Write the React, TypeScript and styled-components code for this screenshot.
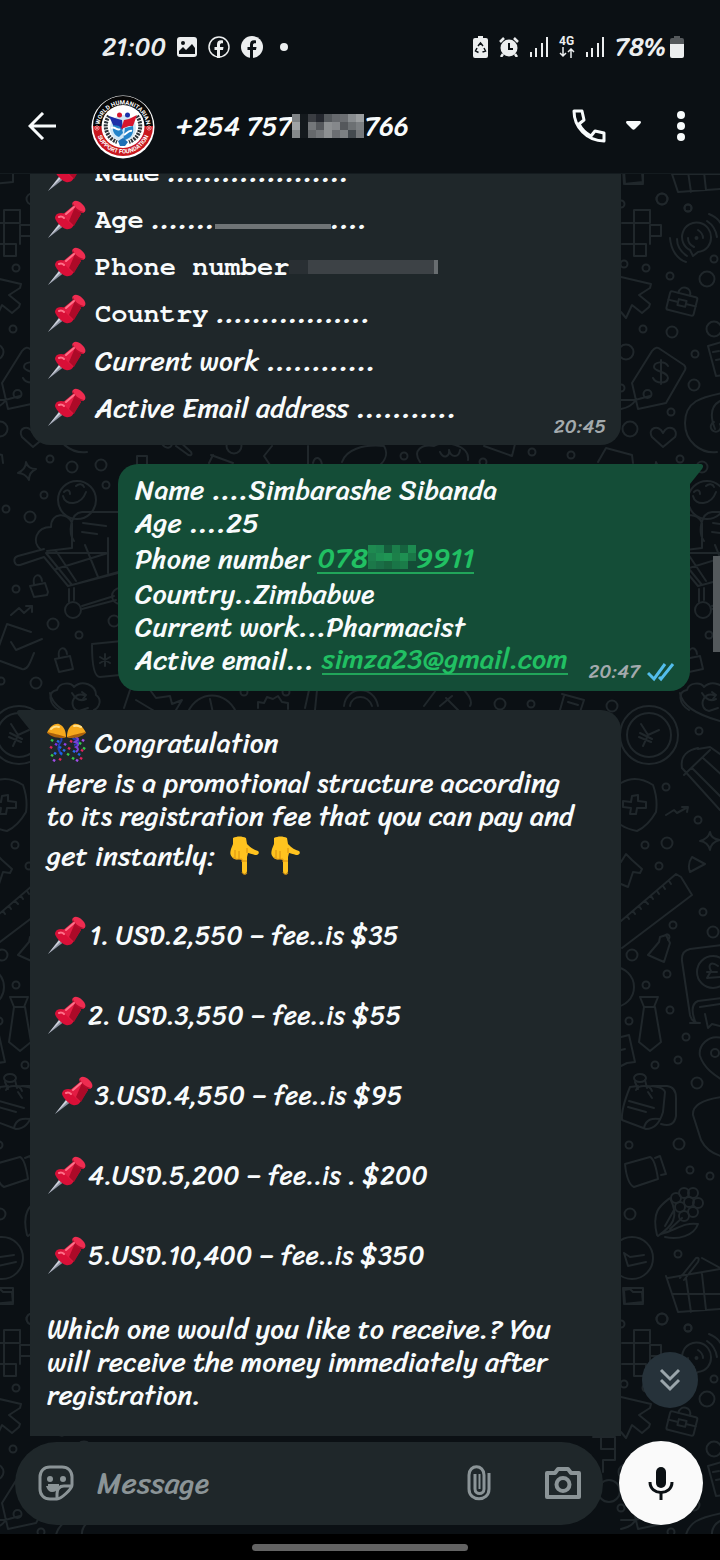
import React from 'react';
import styled, { createGlobalStyle, css } from 'styled-components';

const HAND = 'Sriracha, "Comic Neue", "Open Sans", sans-serif';
const MONO = 'FreeMono, "Courier Prime", "Liberation Mono", monospace';

const GlobalStyle = createGlobalStyle`
  * { box-sizing: border-box; }
  html, body { margin: 0; background: #0b1014; }
  body { font-family: ${HAND}; color: #f8fbfc; }
`;

const Screen = styled.div`
  min-height: 100vh;
  display: flex;
  flex-direction: column;
  overflow: hidden;
`;

const StatusBar = styled.div`
  height: 94px;
  padding: 0 36px 0 102px;
  display: flex;
  align-items: center;
  justify-content: space-between;
  font-size: 25px;
  line-height: 32px;
  color: #eceeef;
`;

const StatusGroup = styled.div<{ $gap: number }>`
  display: flex;
  align-items: center;
  gap: ${(p) => p.$gap}px;
  svg { display: block; flex: none; }
`;

const Level = styled.span`
  display: flex;
  align-items: center;
  gap: 4px;
`;

const Network = styled.span`
  display: flex;
  flex-direction: column;
  align-items: center;
  font: 700 12px/11px Roboto, sans-serif;
`;

const Header = styled.header`
  padding: 0 35px 16px 28px;
  height: 80px;
  display: flex;
  align-items: center;
  border-bottom: 1px solid #141b1f;
`;

const IconButton = styled.button`
  padding: 0;
  border: 0;
  background: none;
  color: inherit;
  display: flex;
  align-items: center;
  justify-content: center;
  flex: none;
`;

const AvatarLink = styled.a`
  margin: 2px 22px 0 35px;
  display: flex;
  flex: none;
`;

const Contact = styled.h1`
  flex: 1;
  margin: 0;
  display: flex;
  align-items: center;
  white-space: pre;
  font-size: 26px;
  line-height: 36px;
  font-weight: 400;
`;

const HeaderActions = styled.div`
  display: flex;
  align-items: center;
  gap: 20px;
`;

const CaretButton = styled(IconButton)`
  margin-right: 16px;
`;

const Main = styled.main`
  flex: 1;
  position: relative;
  display: flex;
  flex-direction: column;
  background: #0b1014;
`;

const WallpaperArt = styled.svg`
  position: absolute;
  inset: 0;
  width: 100%;
  height: 100%;
`;

const Chat = styled.section`
  position: relative;
  flex: 1;
  display: flex;
  flex-direction: column;
  gap: 19px;
  padding: 0 30px;
  overflow: hidden;
`;

type BubbleProps = { $side: 'in' | 'out'; $edge?: 'top' | 'bottom' };

const Bubble = styled.article<BubbleProps>`
  position: relative;
  display: flex;
  align-items: flex-end;
  justify-content: space-between;
  border-radius: 20px;
  padding: 9px 15px 15px 17px;
  ${(p) =>
    p.$side === 'in'
      ? css`
          background: #1f272a;
          margin-right: 69px;
        `
      : css`
          background: #144d37;
          margin-left: 88px;
          border-top-right-radius: 0;
        `}
  ${(p) =>
    p.$edge === 'top' &&
    css`
      margin-top: -25px;
      padding-top: 0;
      padding-bottom: 14px;
      border-top-left-radius: 0;
      border-top-right-radius: 0;
    `}
  ${(p) =>
    p.$edge === 'bottom' &&
    css`
      border-radius: 0 20px 0 0;
      padding-bottom: 25px;
      flex: 1;
      align-items: flex-start;
    `}
`;

const Tail = styled.svg<{ $side: 'in' | 'out' }>`
  position: absolute;
  top: 0;
  ${(p) => (p.$side === 'in' ? 'left: -13px; transform: scaleX(-1);' : 'right: -13px;')}
  width: 14px;
  height: 20px;
`;

const Lines = styled.div`
  font-size: 28px;
  white-space: pre;
`;

const Line = styled.div<{ $h?: number; $mono?: boolean; $figures?: boolean }>`
  display: flex;
  align-items: center;
  min-height: ${(p) => p.$h ?? 33}px;
  line-height: 33px;
  ${(p) =>
    p.$mono &&
    css`
      font-family: ${MONO};
      font-size: 27px;
      font-weight: 700;
    `}
  ${(p) => p.$figures && 'font-size: 26px;'}
  svg { flex: none; }
`;

const Text = styled.span`
  display: block;
`;

const Dots = styled.span`
  font: 400 30px/20px ${HAND};
`;

const EmojiArt = styled.svg<{ $end: number }>`
  display: block;
  margin-right: ${(p) => p.$end}px;
`;

const Smear = styled.span<{ $w: number; $h: number; $tone: string }>`
  width: ${(p) => p.$w}px;
  height: ${(p) => p.$h}px;
  background: ${(p) => p.$tone};
`;

const DotSmear = styled(Smear)`
  align-self: flex-end;
  margin-bottom: 14px;
`;

const TextLink = styled.a`
  display: flex;
  align-items: center;
  height: 31px;
  color: #21c063;
  text-decoration: none;
  border-bottom: 2px solid #21a55a;
`;

const Stamp = styled.footer`
  display: flex;
  align-items: center;
  gap: 7px;
  flex: none;
  margin-bottom: -8px;
  font-size: 19px;
  line-height: 24px;
  color: #a3aaad;
`;

const JumpDown = styled(IconButton)`
  position: absolute;
  right: 22px;
  bottom: 28px;
  width: 56px;
  height: 56px;
  border-radius: 50%;
  background: #26323a;
  color: #9aa5ab;
`;

const ScrollThumb = styled.div`
  position: absolute;
  right: 0;
  top: 382px;
  width: 7px;
  height: 96px;
  background: #54595c;
`;

const Composer = styled.form`
  position: relative;
  display: flex;
  align-items: center;
  gap: 16px;
  padding: 5px 17px 9px 15px;
`;

const Pill = styled.div`
  flex: 1;
  min-width: 0;
  height: 83px;
  padding: 0 22px;
  border-radius: 42px;
  background: #1f272a;
  color: #8b9497;
  display: flex;
  align-items: center;
`;

const Field = styled.input`
  flex: 1;
  width: 0;
  min-width: 0;
  margin: 0 22px;
  padding: 0;
  border: 0;
  outline: 0;
  background: none;
  color: #f8fbfc;
  font: 400 30px/44px ${HAND};
  &::placeholder { color: #8b9497; opacity: 1; }
`;

const ClipButton = styled(IconButton)`
  margin-right: 54px;
`;

const Mic = styled(IconButton)`
  width: 84px;
  height: 84px;
  border-radius: 50%;
  background: #fafafa;
  color: #0b1014;
`;

const NavBar = styled.div`
  height: 26px;
  background: #000;
  display: flex;
  align-items: center;
  justify-content: center;
`;

const NavHandle = styled.div`
  width: 30%;
  height: 7px;
  border-radius: 4px;
  background: #636363;
`;

/* ---------- drawings ---------- */

const SMALL: number[][] = [
  [688, 208], [621, 204], [714, 259], [624, 264], [646, 268], [670, 276], [643, 329], [695, 354], [671, 412],
  [621, 388], [680, 459], [674, 495], [736, 485], [636, 509], [646, 589], [709, 635], [631, 681], [699, 731],
  [666, 787], [698, 820], [645, 845], [659, 866], [703, 912], [673, 925], [667, 974], [646, 985], [670, 1010],
  [629, 1021], [686, 1037], [678, 1060], [655, 1065], [629, 1145], [690, 1170], [710, 1176], [678, 1254],
  [688, 1328], [404, 456], [532, 452], [571, 455], [483, 462], [531, 704], [244, 692], [286, 692],
];
const MEDIUM: number[][] = [
  [662, 199], [672, 332], [694, 385], [702, 467], [731, 465], [660, 517], [683, 624], [744, 621], [666, 683],
  [612, 706], [667, 843], [713, 932], [632, 955], [697, 1083], [679, 1144], [630, 1214], [662, 1319], [500, 704],
];
const LARGE: number[][] = [[707, 279], [714, 329], [626, 352], [630, 429], [234, 446]];

const Doodles = () => (
  <g id="doodles" fill="none" stroke="#20272b" strokeWidth="2" strokeLinejoin="round" strokeLinecap="round">
    {SMALL.map(([x, y]) => <circle key={`${x}-${y}`} cx={x} cy={y} r="3.5" />)}
    {MEDIUM.map(([x, y]) => <circle key={`${x}-${y}`} cx={x} cy={y} r="5.5" />)}
    {LARGE.map(([x, y]) => <circle key={`${x}-${y}`} cx={x} cy={y} r="7.5" />)}
    <path d="M623 168h20v14l-19 2zM593 317h8v12h14v11h-12v12M601 329v-12h14v12M622 223h28v-13h-16v46h12v-12h-24M650 225h11v11h-11zM650 225v19" />
    <circle cx="609" cy="371" r="11" />
    <path d="M690 250l3 6 5-4c9-1 13-8 13-14a14.500 14.500 0 1 0-21 12zM688 238c0 4 2 7 6 9M698 230c3 2 5 5 5 8M670 238c1 12 7 21 16 24M677 239c0 7 4 13 10 17M707 221c6 4 9 9 10 16M709 214c8 3 12 7 14 15" />
    <circle cx="696.500" cy="238" r="1" />
    <path d="M621 277l30 7-1 4-11 7 11 9-1 3-7 6-10-8-6 13-5-6" />
    <g transform="rotate(14 682 303)"><rect x="668" y="294" width="28" height="19" rx="2" /><path d="M676 294c0-9 12-9 12 0M668 303h10M686 303h10" /><rect x="678" y="300" width="8" height="6" /></g>
    <path d="M660 349l24 16c2 2 2 3 1 5l-19 33-28 6-6-26 20-32c3-4 6-4 8-2zM661 360v24M668 366c-4-6-14-4-14 1s14 4 14 11c-1 6-12 6-15 0M621 400h14l15-4M621 409q10-2 14-8" />
    <circle cx="647.500" cy="394" r="4" />
    <path d="M722 342l-14 4 8 30 8-1M713 352l6-1M716 360l5-1M663 447l-11-10c-5-8 6-14 11-4 5-10 16-4 12 4zM722 393c-20 4-37 8-37 30 0 19 16 31 32 29M720 401c-11 6-9 18-5 28M714 422a5 5 0 1 0 6 2" />
    <path d="M656 462q2 7 10 7-7 3-7 11-4-7-11-7 8-4 8-11z" />
    <circle cx="707" cy="500" r="19" /><path d="M694 492c3-3 6-2 6 2M706 486c3-3 7-2 8 1M693 496c2 10 18 10 23-4" />
    <path d="M671 550c-10-8-5-23 10-23 0-15 17-15 21-4v25l-25 3M704 541c-6-8-4-28 8-29h36M713 523l23 3M712 532l15 2M674 549l-26 7c-6 2-4 10 2 9l24-8 24 29 50-13M676 553h60M676 553l26 32 50-14M686 551l20 30M715 545l13 32M738 538v35M686 569l52-16M699 589v13M704 588v12M712 606l32-10M712 609l34-9" />
    <circle cx="703" cy="610" r="8" /><circle cx="750" cy="596" r="8" />
    <path d="M660 586l15-3 3 9-1 3-13 2zM664 584c-2-10 7-12 8-3M685 659l15-3 3 13-14 3zM689 657c-2-10 7-12 8-3M641 615l8-7 5 5 8-7M656 606h6v6M661 632l-24-8-8 22M641 642l5 8 26-11M622 658l30 11c6 2 9-9 12-16M722 644l40-4M750 675l-20 2c-5 0-8-8-8-32M735 654v12M730 657l10 6M740 657l-10 6M689 710c-10-6-12-18-2-20 2-8 14-8 17-3 8-8 22-2 22 8 6 4 4 12-2 15M714 695c-12-4-16 14-5 16l9-3M712 692l4 3-3 4" />
    <circle cx="649" cy="735" r="29" /><circle cx="649" cy="735" r="22" />
    <path d="M641 724l7 11 11-5M648 735l-5 11M640 733l12 6M639 737l12 5M680 693q3 18 40 28M702 693q6 10 14 6M698 749l12-2 20 14M682 768l38 42M682 768c-2-12 6-18 16-20M684 775l26-25M692 768l30 30M703 758l20 18M621 783q15-9 32 2 5 14 3 27-8 14-19 19-10-2-16-6M632 796l-1 6-8-1v6l8 1-1 6h6l1-6h9v-6l-8-1v-6zM666 815l8-5 3 3 11-6M682 807h6l-1 5" />
    <path d="M710 832q1 7 10 8-9 2-10 10-2-8-10-9 8-2 10-9zM692 857l13 7-15 8q-3-8 2-15zM621 862l5-8 6 6 10 9-2 4-7-1-5 15-7-3M621 921l55-47 5 3 11 18-70 53M627 916l2 3M633 911l2 3M639 906l2 3M645 901l3 3M651 896l2 3M657 891l2 3M663 886l2 3M669 881l2 3M648 955l11-13 1-5 6-2 4 8-6 19-7-3zM664 936c3-4 8 0 4 4" />
    <circle cx="614" cy="987" r="20" />
    <path d="M640 997h18l-4 10h-10zM644 1007l-5 35 11 9 11-9-6-35M621 1037l8-2 6 27-8 1-6 3M621 1050l4-1M722 945l-32 4q-9 2-8 12l8 54q2 8 10 8M690 1023h10M722 998l-24 3q-9 4-3 20M700 1007l20-3M705 1014l3 14 4-4 8 2" />
    <circle cx="713" cy="972" r="16" /><path d="M718 966c-8-6-10 0-7 5l-4 7 14-1M707 972h10M722 1038c-14-4-24 8-22 18 4 12 14 19 24 25M722 1097c-15 2-30 6-29 18l8 25q6 12 20 16" />
    <circle cx="715" cy="1053" r="4" />
    <path d="M638 1086l-8 1q-9 22-8 33l24 9q12 0 17-17l2-20q-2-6-19-6M652 1086l15 0q9 1 9 12v18q-2 12-15 8M629 1101l25 7M628 1107l18 5M644 1128c2-9 8-10 16-9" />
    <ellipse cx="640" cy="1078" rx="6" ry="4" /><path d="M635 1082l3 7M645 1080l2 8M636 1090c2-5 14-6 16 1M648 1092l4 6" />
    <path d="M625 1164l25-7q5 2 8 22l-24 8q-7-3-9-23zM655 1158l5-2 6 18-5 1M657 1235c-6-24 4-30 13-37 10 20 2 28-12 38zM661 1234c16-4 22-12 37-10-4 12-20 16-33 13M665 1226l9-16M682 1218l-12 11" />
    {[[676, 1198], [684, 1193], [693, 1193], [680, 1207], [689, 1202], [698, 1203], [684, 1216], [693, 1212]].map(([x, y]) => <circle key={`${x}-${y}`} cx={x} cy={y} r="5" />)}
    <circle cx="632" cy="1258" r="21" />
    <path d="M624 1253l6 4 14-2M624 1253l4 13 18-4M624 1290l6-1 3 3h9l1 12h-18zM668 1278l52-9M666 1276l12 36 42-3M672 1294h50M686 1278l5 34M702 1274l4 36M680 1278l16-20q4-1 2 4l-14 18M702 1258l18 10" />
    <path d="M137 456h10v12h-10zM162 444c4 6 12 4 9-2M178 440l13 12c2 4-2 4-4 2l-11-8M211 455l22 8M209 463l4-8M272 446l-8 10 8 12M308 446v22M313 463c2-8 8-6 9 2M342 462c4-12 20-18 42-16 6 10-2 18-8 22M420 462c-8-12 2-18 14-16 8-6 36-2 34 14M440 452c4 8 10 4 9-2 2 8 10 8 11 0M484 446l28 10 3-12M598 462l8-14 26 7 1 8M124 708l6-18M136 700l20 12M150 690l6 8 14-2 2 8 10-4-6 10M188 712c10-22 38-22 48 0M210 699l3 14M258 708v-6l6 1 3-6 6 2 5-3 4 6 6 1v6M305 708l4-18h8l-2 20M344 706c2-20 30-22 34 0M350 706c2-12 18-12 22 0M424 706l12-16M440 706l12-10M446 698l12 12M470 706q4-6-8-18M562 694l22 6-4 12M560 710l4-14M568 702l10 3" />
  </g>
);

const Wallpaper = () => (
  <WallpaperArt aria-hidden="true">
    <g transform="translate(0 -174)">
      <Doodles />
      <use href="#doodles" x="-630" />
      <use href="#doodles" x="630" />
      <use href="#doodles" y="1120" />
      <use href="#doodles" x="-630" y="1120" />
      <use href="#doodles" y="-1120" />
    </g>
  </WallpaperArt>
);

const Pin = ({ end = 9 }: { end?: number }) => (
  <EmojiArt $end={end} width="39" height="39" viewBox="0 0 39 39" role="img" aria-label="Pushpin">
    <path d="M1 38L14 21l4 4z" fill="#8d93a1" />
    <path d="M1 38l13-16 2 1z" fill="#d4d8e2" />
    <path d="M10 14c4-2 8-1 11 2l6 7c0 4-4 7-8 6-4-1-10-7-11-11 0-2 1-3 2-4z" fill="#d90f37" />
    <path d="M15 15l11-9 8 8-8 12z" fill="#e31c43" />
    <path d="M28 7l6 7-7 12-5-5z" fill="#ad0a28" />
    <path d="M26 2c3-3 8 0 11 4 2 3 2 6-1 7-3 0-8-4-10-7-1-2-1-3 0-4z" fill="#ee2c50" />
    <path d="M26 3c1 4 6 8 11 9-2 2-6 0-8-2-3-3-4-5-3-7z" fill="#b70b2c" />
    <path d="M12 17c2-1 4 0 5 1M19 14l8-7" fill="none" stroke="#ff7189" strokeWidth="2" strokeLinecap="round" />
  </EmojiArt>
);

const CONFETTI: [number, number, string][] = [
  [5, 17, '#35c94a'], [9, 21, '#7b35e8'], [4, 24, '#e0245e'], [13, 24, '#1d63e8'], [8, 30, '#2a6bf0'], [5, 32, '#35c94a'],
  [14, 30, '#1d63e8'], [17, 27, '#2a6bf0'], [7, 37, '#a04de8'], [13, 36, '#e0245e'], [18, 21, '#8b44e8'], [22, 25, '#e0245e'],
  [21, 31, '#35c94a'], [27, 28, '#2a6bf0'], [33, 20, '#35c94a'], [36, 17, '#a04de8'], [35, 27, '#e0245e'], [37, 25, '#35c94a'],
  [32, 31, '#1d63e8'], [34, 35, '#e0245e'], [26, 35, '#35c94a'], [30, 37, '#a04de8'], [24, 18, '#e0245e'], [11, 18, '#2a6bf0'],
];

const PartyBall = () => (
  <EmojiArt $end={9} width="39" height="39" viewBox="0 0 39 39" role="img" aria-label="Confetti ball">
    <path d="M11 12q6 3 2 8t2 12M28 12q-5 4 3 5 2 4-4 5" fill="none" stroke="#243fb5" strokeWidth="2" />
    <path d="M28 14q6 2 0 5 6 2 1 5 4 2 0 5" fill="none" stroke="#7a3fd6" strokeWidth="2" />
    {CONFETTI.map(([x, y, c]) => <rect key={`${x}-${y}`} x={x - 1} y={y - 1} width="2.5" height="2.5" fill={c} transform={`rotate(30 ${x} ${y})`} />)}
    <path d="M0 10C3 3 8 0 12 1c5 2 7 7 7 13-2 1-5 1-7 0z" fill="#f5a81c" />
    <path d="M39 10C36 3 31 0 27 1c-5 2-7 7-7 13 2 1 5 1 7 0z" fill="#f5a81c" />
    <path d="M0 9c5 1 13 3 19 5-3 2-16 1-19-5zM39 9c-5 1-13 3-19 5 3 2 16 1 19-5z" fill="#a85f0c" />
    <path d="M4 6c2-2 5-3 8-2M27 3c3-1 5 0 7 1" stroke="#ffe08a" strokeWidth="2" fill="none" strokeLinecap="round" />
  </EmojiArt>
);

const Hand = ({ end = 0 }: { end?: number }) => (
  <EmojiArt $end={end} width="29" height="39" viewBox="0 0 29 39" role="img" aria-label="Pointing down">
    <path d="M3 2c4-2 9-2 13 0l1 6c4 4 7 6 11 7 2 2 0 4-3 4-3-1-6-2-7-2l-1 4v14c0 4-5 4-5 0V24l-3-1c-3 1-6 0-7-2-2-2-2-4-1-8l2-5z" fill="#ffc31f" />
    <path d="M5 22v-8M9 23v-8M17 17v-5M12 25h5" stroke="#d98e0e" strokeWidth="1" fill="none" />
    <path d="M3 21c3 3 6 2 9 2v3M17 37c-1 2-4 2-5-1" stroke="#e59a12" fill="none" strokeWidth="1" />
  </EmojiArt>
);

const Mosaic = ({ cells, cell, height }: { cells: string[][]; cell: number; height: number }) => {
  const rowHeight = height / cells.length;
  return (
    <svg width={cells[0].length * cell} height={height} shapeRendering="crispEdges" aria-hidden="true">
      {cells.map((row, y) => row.map((c, x) => <rect key={`${x}-${y}`} x={x * cell} y={y * rowHeight} width={cell} height={rowHeight} fill={c} />))}
    </svg>
  );
};

const NAME_CELLS = [
  ['#7e8285', '#14191d', '#3a3d42', '#24272e', '#55595d', '#66696d', '#6b6e72', '#888c8f', '#9b9ea0'],
  ['#a0a3a5', '#14191d', '#74777a', '#55585c', '#8d9092', '#85888b', '#55585c', '#6c7073', '#7b7f82'],
  ['#84888a', '#14191d', '#66696c', '#74777a', '#8d9092', '#6b6e72', '#7c8083', '#444a4f', '#74777a'],
];
const LINK_CELLS = [
  ['#1e8a50', '#1d8450', '#155c3c', '#1b7d4a', '#16633f', '#1d8a50'],
  ['#1d7f4d', '#1e8f52', '#1f9554', '#1c8049', '#1e9052', '#1a7647'],
  ['#1b7849', '#1a6e46', '#18663f', '#197547', '#1a7c48', '#144d37'],
];

const Avatar = () => (
  <svg width="64" height="64" viewBox="0 0 64 64" role="img" aria-label="World Humanitarian Support Foundation">
    <defs>
      <path id="arcTop" d="M8.500 33a23.500 23.500 0 0 1 47 0" />
      <path id="arcBottom" d="M4.500 31a27.500 27.500 0 0 0 55 0" />
    </defs>
    <circle cx="32" cy="32" r="31.500" fill="#fff" />
    <path d="M2 31a30 30 0 0 1 60 0z" fill="#070707" />
    <path d="M2 31a30 30 0 0 0 60 0z" fill="#c9171e" />
    <circle cx="32" cy="31.500" r="21.500" fill="#fff" />
    <g fill="#fff" fontFamily="Roboto, sans-serif" fontWeight="700" fontSize="6" textAnchor="middle">
      <text><textPath href="#arcTop" startOffset="50%">WORLD HUMANITARIAN</textPath></text>
      <text><textPath href="#arcBottom" startOffset="50%">SUPPORT FOUNDATION</textPath></text>
    </g>
    <path d="M3 33h6M6 30v6M4 31l4 4M8 31l-4 4M55 33h6M58 30v6M56 31l4 4M60 31l-4 4" stroke="#e9868a" strokeWidth="1" />
    <path d="M18 21A17 17 0 0 0 26 47M46 21A17 17 0 0 1 38 47" fill="none" stroke="#2c3338" strokeWidth="4" strokeDasharray="2 1" />
    <circle cx="32" cy="33" r="13" fill="#cfe6f5" />
    <path d="M22 30h8l2 8-4 4c-5-2-7-6-6-12zM34 33l8-2c1 6-1 10-4 12l-6 3z" fill="#2383c9" />
    <path d="M18 21l9 3 4 1 1 10-4-4-6-1z" fill="#1c2fa8" />
    <circle cx="28.500" cy="20" r="2.500" fill="#d8152d" />
    <path d="M46 20l-8 4-5 1-3 9 8-3 4 0z" fill="#d8152d" />
    <circle cx="36.500" cy="20" r="2.500" fill="#1c2fa8" />
    <path d="M20 33c4-2 6 3 9 1M33 40c3-2 5-5 8-4" stroke="#fff" strokeWidth="2" fill="none" />
    <path d="M27 46l5-3 5 4-3 4h-5z" fill="#1d6fb5" />
  </svg>
);

const Facebook = ({ outline = false }: { outline?: boolean }) => (
  <svg width="22" height="22" viewBox="0 0 22 22" fill="none">
    <circle cx="11" cy="11" r={outline ? 10 : 11} fill={outline ? 'none' : '#eceeef'} stroke={outline ? '#eceeef' : 'none'} strokeWidth="1.500" />
    <path d="M12 22v-8h3l.5-3H12V9c0-1.500 1-2 3-1.800V4.500c-4-.8-6 .8-6 4V11H6.500v3H9v8" fill={outline ? '#eceeef' : '#0b1014'} />
  </svg>
);

const Signal = () => (
  <svg width="18" height="20" fill="#eceeef">
    <path d="M0 15h2v5H0zM5 11h2v9H5zM11 6h2v14h-2zM16 0h2v20h-2z" />
  </svg>
);

const Ticks = () => (
  <svg width="28" height="20" viewBox="0 0 28 20" fill="none" stroke="#53bdeb" strokeWidth="3" role="img" aria-label="Read">
    <path d="M1 11l6 6L18 2M12 15l2 2L26 2" />
  </svg>
);

const TailShape = ({ side }: { side: 'in' | 'out' }) => (
  <Tail $side={side} viewBox="0 0 14 20" aria-hidden="true">
    <path d="M0 0h11c3 0 4 2 2 5L1 20H0z" fill={side === 'in' ? '#1f272a' : '#144d37'} />
  </Tail>
);

const OFFERS = [
  { key: 1, lead: '', gap: 4, text: '1. USD.2,550 – fee..is $35' },
  { key: 2, lead: '', gap: 2, text: '2. USD.3,550 – fee..is $55' },
  { key: 3, lead: ' ', gap: 2, text: '3.USD.4,550 – fee..is $95' },
  { key: 4, lead: '', gap: 2, text: '4.USD.5,200 – fee..is . $200' },
  { key: 5, lead: '', gap: 2, text: '5.USD.10,400 – fee..is $350' },
];

export default function App() {
  return (
    <Screen>
      <GlobalStyle />
      <StatusBar>
        <StatusGroup $gap={11}>
          <time>21:00</time>
          <svg width="20" height="20" viewBox="0 0 20 20"><rect width="20" height="20" rx="3" fill="#eceeef" /><circle cx="6" cy="6" r="2" fill="#0b1014" /><path d="M2 17v-3l4-4 3 3 6-6 3 4v6z" fill="#0b1014" /></svg>
          <Facebook outline />
          <Facebook />
          <svg width="28" height="8"><circle cx="10" cy="4" r="4" fill="#eceeef" /></svg>
        </StatusGroup>
        <StatusGroup $gap={11}>
          <svg width="15" height="22" viewBox="0 0 15 22"><path d="M5 0h5v2h3q2 0 2 2v16q0 2-2 2H2q-2 0-2-2V4q0-2 2-2h3z" fill="#eceeef" /><path d="M5 10l2.500-3L10 10M11 12l1.500 3-3 1M4 12l-1.500 3 3 1.500" fill="none" stroke="#0b1014" strokeWidth="1.500" /></svg>
          <svg width="20" height="20" viewBox="0 0 20 20"><circle cx="10" cy="11" r="8.500" fill="#eceeef" /><path d="M10 6v6h4" stroke="#0b1014" strokeWidth="2" fill="none" /><path d="M1 5l4-4M19 5l-4-4M4 17l-2 3M16 17l2 3" stroke="#eceeef" strokeWidth="2.500" /></svg>
          <Signal />
          <Network>
            4G
            <svg width="16" height="11" fill="none" stroke="#eceeef" strokeWidth="1.500"><path d="M4 0v9M1 6l3 3 3-3M12 11V2M9 5l3-3 3 3" /></svg>
          </Network>
          <Signal />
          <Level>
            78%
            <svg width="14" height="22" viewBox="0 0 14 22"><path d="M4 0h6v2h2q2 0 2 2v4H0V4q0-2 2-2h2z" fill="#55595c" /><path d="M0 8h14v12q0 2-2 2H2q-2 0-2-2z" fill="#eceeef" /></svg>
          </Level>
        </StatusGroup>
      </StatusBar>

      <Header>
        <IconButton aria-label="Back">
          <svg width="28" height="28" viewBox="0 0 28 28" fill="none" stroke="currentColor" strokeWidth="3"><path d="M28 14H3M15 1L2 14l13 13" /></svg>
        </IconButton>
        <AvatarLink href="#profile"><Avatar /></AvatarLink>
        <Contact>
          +254 757
          <Mosaic cells={NAME_CELLS} cell={8} height={24} />
          766
        </Contact>
        <HeaderActions>
          <IconButton aria-label="Call">
            <svg width="34" height="34" viewBox="0 0 34 34" fill="none" stroke="currentColor" strokeWidth="3" strokeLinejoin="round"><path d="M2 2h8l2 9-5 4c3 6 6 9 12 12l4-5 9 2v8C15 32 2 18 2 2z" /></svg>
          </IconButton>
          <CaretButton aria-label="Call options">
            <svg width="15" height="9" viewBox="0 0 15 9" fill="currentColor"><path d="M1 0h13q2 1 0 3L9 8q-1.500 1.500-3 0L1 3q-2-2 0-3z" /></svg>
          </CaretButton>
          <IconButton aria-label="More">
            <svg width="8" height="30" viewBox="0 0 8 30" fill="currentColor"><circle cx="4" cy="4" r="4" /><circle cx="4" cy="15" r="4" /><circle cx="4" cy="26" r="4" /></svg>
          </IconButton>
        </HeaderActions>
      </Header>

      <Main>
        <Wallpaper />
        <Chat>
          <Bubble $side="in" $edge="top">
            <Lines>
              <Line $h={47} $mono><Pin /><Text>Name<Dots> ....................</Dots></Text></Line>
              <Line $h={47} $mono><Pin /><Text>Age<Dots> .......</Dots></Text><DotSmear $w={116} $h={5} $tone="#6f7476" /><Text><Dots>....</Dots></Text></Line>
              <Line $h={47} $mono>
                <Pin />Phone number
                <Smear $w={19} $h={14} $tone="#292f33" /><Smear $w={126} $h={14} $tone="#3d4246" /><Smear $w={4} $h={14} $tone="#686d70" />
              </Line>
              <Line $h={47} $mono><Pin /><Text>Country<Dots> .................</Dots></Text></Line>
              <Line $h={47}><Pin /><Text>Current work<Dots> ............</Dots></Text></Line>
              <Line $h={47}><Pin /><Text>Active Email address<Dots> ...........</Dots></Text></Line>
            </Lines>
            <Stamp><time>20:45</time></Stamp>
          </Bubble>

          <Bubble $side="out">
            <TailShape side="out" />
            <Lines>
              <Line><Text>Name<Dots> ....</Dots>Simbarashe Sibanda</Text></Line>
              <Line><Text>Age<Dots> ....</Dots>25</Text></Line>
              <Line $h={38}>
                <Text>{'Phone number '}</Text>
                <TextLink href="tel:078">078<Mosaic cells={LINK_CELLS} cell={8} height={24} />9911</TextLink>
              </Line>
              <Line><Text>Country<Dots>..</Dots>Zimbabwe</Text></Line>
              <Line><Text>Current work<Dots>...</Dots>Pharmacist</Text></Line>
              <Line><Text>Active email<Dots>... </Dots></Text><TextLink href="mailto:simza23@gmail.com">simza23@gmail.com</TextLink></Line>
            </Lines>
            <Stamp><time>20:47</time><Ticks /></Stamp>
          </Bubble>

          <Bubble $side="in" $edge="bottom">
            <TailShape side="in" />
            <Lines>
              <Line $h={47}><PartyBall />Congratulation</Line>
              <Line>Here is a promotional structure according</Line>
              <Line>to its registration fee that you can pay and</Line>
              <Line $h={47}>{'get instantly:  '}<Hand end={12} /><Hand /></Line>
              {OFFERS.map((o) => (
                <React.Fragment key={o.key}>
                  <Line />
                  <Line $h={47} $figures><Text>{o.lead}</Text><Pin end={o.gap} />{o.text}</Line>
                </React.Fragment>
              ))}
              <Line />
              <Line>Which one would you like to receive.? You</Line>
              <Line>will receive the money immediately after</Line>
              <Line>registration.</Line>
            </Lines>
          </Bubble>
          <ScrollThumb />
          <JumpDown aria-label="Scroll to latest">
            <svg width="22" height="24" viewBox="0 0 22 24" fill="none" stroke="currentColor" strokeWidth="3"><path d="M2 2l9 9 9-9M2 12l9 9 9-9" /></svg>
          </JumpDown>
        </Chat>

        <Composer onSubmit={(e) => e.preventDefault()}>
          <Pill>
            <IconButton type="button" aria-label="Stickers">
              <svg width="38" height="38" viewBox="0 0 38 38" fill="none" stroke="currentColor" strokeWidth="3"><path d="M13 3h12c6 0 10 4 10 10v8c0 4-11 14-15 14h-7C7 35 3 31 3 25V13C3 7 7 3 13 3zM20 35v-5c0-6 3-8 7-8h8" /><path d="M11 21h11" strokeWidth="2" /><path d="M9 22h13q-2 6-7 6-4 0-6-6z" fill="currentColor" stroke="none" /><circle cx="13" cy="15" r="3" fill="currentColor" stroke="none" /><circle cx="26" cy="15" r="3" fill="currentColor" stroke="none" /></svg>
            </IconButton>
            <Field aria-label="Message" placeholder="Message" />
            <ClipButton type="button" aria-label="Attach">
              <svg width="24" height="36" viewBox="0 0 24 36" fill="none" stroke="currentColor" strokeWidth="3"><path d="M22 8v16c0 13-20 13-20 0V10C2-1 17-1 17 10v14c0 6-9 6-9 0V9" /><path d="M12.500 9v15" strokeWidth="2" /></svg>
            </ClipButton>
            <IconButton type="button" aria-label="Camera">
              <svg width="36" height="32" viewBox="0 0 36 32" fill="none" stroke="currentColor" strokeWidth="4" strokeLinejoin="round"><path d="M2 6h8l3-4h10l3 4h8v24H2z" /><circle cx="18" cy="17.500" r="6.500" /></svg>
            </IconButton>
          </Pill>
          <Mic type="button" aria-label="Record voice message">
            <svg width="26" height="36" viewBox="0 0 26 36" fill="none" stroke="currentColor" strokeWidth="3"><rect x="8" y="2" width="10" height="21" rx="5" fill="currentColor" stroke="none" /><path d="M2 17c0 14 22 14 22 0M13 28v7" /></svg>
          </Mic>
        </Composer>
      </Main>
      <NavBar><NavHandle /></NavBar>
    </Screen>
  );
}
